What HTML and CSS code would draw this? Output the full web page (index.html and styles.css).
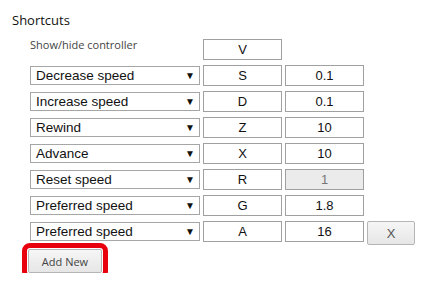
FILE: index.html
```html
<!DOCTYPE html>
<html lang="en">

<head>
  <meta charset="UTF-8" />
  <meta name="viewport" content="width=device-width, initial-scale=1.0" />
  <title>Shortcuts</title>
  <link rel="stylesheet" href="styles.css">
</head>

<body>
  <div class="shortcuts">
    <h3>Shortcuts</h3>

    <div class="rows">
      <div class="row">
        <div class="label">Show/hide controller</div>
        <input class="key" type="text" value="V" />
      </div>

      <div class="row">
        <div class="select"><span>Decrease speed</span><span class="arrow">&#9660;</span></div>
        <input class="key" type="text" value="S" />
        <input class="value" type="text" value="0.1" />
      </div>

      <div class="row">
        <div class="select"><span>Increase speed</span><span class="arrow">&#9660;</span></div>
        <input class="key" type="text" value="D" />
        <input class="value" type="text" value="0.1" />
      </div>

      <div class="row">
        <div class="select"><span>Rewind</span><span class="arrow">&#9660;</span></div>
        <input class="key" type="text" value="Z" />
        <input class="value" type="text" value="10" />
      </div>

      <div class="row">
        <div class="select"><span>Advance</span><span class="arrow">&#9660;</span></div>
        <input class="key" type="text" value="X" />
        <input class="value" type="text" value="10" />
      </div>

      <div class="row">
        <div class="select"><span>Reset speed</span><span class="arrow">&#9660;</span></div>
        <input class="key" type="text" value="R" />
        <input class="value" type="text" value="1" disabled />
      </div>

      <div class="row">
        <div class="select"><span>Preferred speed</span><span class="arrow">&#9660;</span></div>
        <input class="key" type="text" value="G" />
        <input class="value" type="text" value="1.8" />
      </div>

      <div class="row">
        <div class="select"><span>Preferred speed</span><span class="arrow">&#9660;</span></div>
        <input class="key" type="text" value="A" />
        <input class="value" type="text" value="16" />
        <button class="remove">X</button>
      </div>
    </div>

    <button class="add-new">Add New</button>
  </div>
</body>

</html>
```

FILE: styles.css
```css
/* General Styles */
body {
  margin: 0;
  padding: 0;
  background: #fff;
  font-family: "Open Sans", "Noto Sans", sans-serif;
  color: #222;
}

.shortcuts {
  padding: 11px 0 0 12px;
}

.shortcuts h3 {
  margin: 0 0 10px 0;
  font-size: 13px;
  font-weight: normal;
  color: #111;
}

/* Rows */
.rows {
  padding-left: 18px;
}

.row {
  display: flex;
  align-items: center;
  gap: 3px;
  height: 21px;
  margin-bottom: 5px;
}

.label {
  width: 170px;
  font-size: 11px;
  color: #444;
  align-self: flex-start;
  line-height: 14px;
  margin-top: -1px;
}

.select {
  box-sizing: border-box;
  width: 170px;
  height: 19px;
  border: 1px solid #a6a6a6;
  display: flex;
  justify-content: space-between;
  align-items: center;
  padding: 0 4px 0 5px;
  font-family: "Liberation Sans", Arial, sans-serif;
  font-size: 13.5px;
  color: #111;
}

.select .arrow {
  font-size: 10px;
  color: #111;
}

.key,
.value {
  box-sizing: border-box;
  width: 79px;
  height: 21px;
  margin: 0;
  padding: 0;
  border: 1px solid #a0a0a0;
  text-align: center;
  font-family: "Liberation Sans", Arial, sans-serif;
  font-size: 13px;
  color: #111;
  background: #fff;
}

.value:disabled {
  background: #ebebeb;
  color: #777;
}

.remove {
  box-sizing: border-box;
  align-self: flex-start;
  width: 48px;
  height: 24px;
  margin: 0;
  border: 1px solid #b5b5b5;
  border-radius: 2px;
  background: linear-gradient(#f6f6f6, #e6e6e6);
  font-family: "Liberation Sans", Arial, sans-serif;
  font-size: 13px;
  color: #555;
}

/* Add New */
.add-new {
  box-sizing: border-box;
  width: 74px;
  height: 24px;
  margin: 2px 0 0 16px;
  border: 1px solid #b5b5b5;
  border-radius: 2px;
  background: linear-gradient(#f6f6f6, #e6e6e6);
  font-family: "Open Sans", "Noto Sans", sans-serif;
  font-size: 11px;
  color: #444;
  outline: 5px solid #e8000c;
  outline-offset: 1px;
}
```
